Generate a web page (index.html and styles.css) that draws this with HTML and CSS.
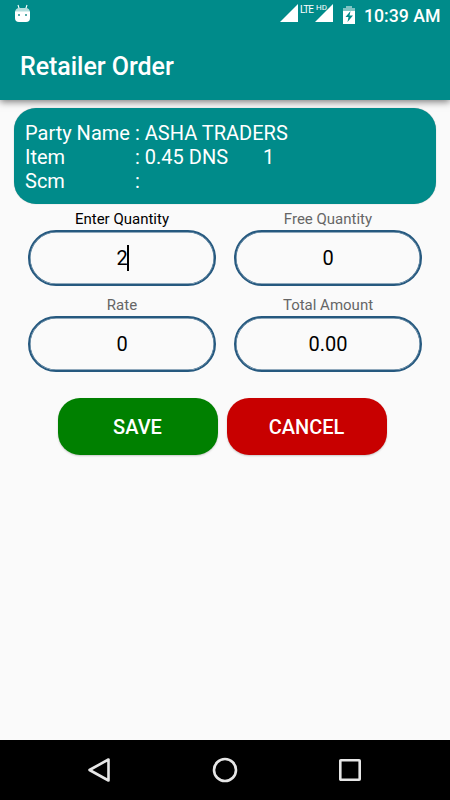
FILE: index.html
```html
<!DOCTYPE html>
<html lang="en">
<head>
<meta charset="utf-8">
<title>Retailer Order</title>
<link rel="stylesheet" href="styles.css">
</head>
<body>
<div class="screen">
  <header class="top">
    <div class="status">
      <svg class="droid" width="15" height="18" viewBox="0 0 15 18"><path d="M3 1 4.300 5M12 1 10.700 5" stroke="#fff" stroke-width="1.1"/><path d="M0 9Q0 4 4.500 4h6Q15 4 15 9Z" fill="#b5dedd"/><path d="M0 7.500h15V14q0 4-4 4h-7q-4 0-4-4Z" fill="#fff"/><path d="M3 10h2v2H3zM10 10h2v2h-2z" fill="#55aaa9"/></svg>
      <div class="indicators">
        <svg width="18" height="18" viewBox="0 0 18 18"><path d="M0 18 18 0V18Z" fill="#fff"/></svg>
        <span class="net">LTE</span>
        <span class="sim"><svg width="18" height="18" viewBox="0 0 18 18"><path d="M0 18 18 0V18Z" fill="#fff"/></svg><span class="hd">HD</span></span>
        <svg class="battery" width="12" height="18" viewBox="0 0 12 18"><path d="M0 2h3V0h6v2h3v4H0Z" fill="#7fc4c3"/><path d="M0 5h12v13H0Z" fill="#fff"/><path d="M7.500 5 2.500 11h3L4.500 16 10 9.500H6.500Z" fill="#008b8a"/></svg>
        <span class="clock">10:39 AM</span>
      </div>
    </div>
    <h1>Retailer Order</h1>
  </header>
  <main>
    <section class="card">
      <span>Party Name</span><span>: ASHA TRADERS</span><span></span>
      <span>Item</span><span>: 0.45 DNS</span><span>1</span>
      <span>Scm</span><span>:</span><span></span>
    </section>
    <form class="fields">
      <div class="field active"><label>Enter Quantity</label><div class="box">2<i class="caret"></i></div></div>
      <div class="field"><label>Free Quantity</label><div class="box">0</div></div>
      <div class="field"><label>Rate</label><div class="box">0</div></div>
      <div class="field"><label>Total Amount</label><div class="box">0.00</div></div>
    </form>
    <div class="actions">
      <button class="save">SAVE</button>
      <button class="cancel">CANCEL</button>
    </div>
  </main>
  <nav>
    <svg width="24" height="26" viewBox="0 0 24 26"><path d="M21.500 2.500V23.500L2.500 13Z"/></svg>
    <svg width="26" height="26" viewBox="0 0 26 26"><circle cx="13" cy="13" r="11"/></svg>
    <svg width="24" height="26" viewBox="0 0 24 26"><rect x="2.300" y="3.300" width="19.400" height="19.400" rx=".5"/></svg>
  </nav>
</div>
</body>
</html>
```
FILE: styles.css
```css
* { box-sizing: border-box; }
body { margin: 0; font-family: Roboto, sans-serif; background: #fafafa; }
.screen { width: 450px; height: 800px; display: flex; flex-direction: column; overflow: hidden; }
.top { height: 100px; background: #008b8a; color: #fff; box-shadow: 0 2px 7px rgba(0,0,0,.5); flex: none; }
.status { height: 32px; padding: 4px 11px 0 15px; display: flex; justify-content: space-between; align-items: flex-start; }
.indicators { display: flex; align-items: flex-start; }
.indicators svg { display: block; flex: none; }
.net { width: 16px; padding-left: 2px; font-size: 10px; line-height: 11px; letter-spacing: -.9px; white-space: nowrap; }
.sim { position: relative; margin-left: 1px; }
.hd { position: absolute; left: 1px; top: -1px; font-size: 8px; line-height: 9px; }
.indicators .battery { margin: 2px 0 0 10px; }
.clock { width: 75px; margin-left: 9px; font-size: 17.700px; line-height: 24px; font-weight: 500; white-space: nowrap; }
h1 { margin: 19px 0 0 20px; font-size: 25px; line-height: 32px; font-weight: 500; letter-spacing: -.04px; }
main { flex: 1; padding-top: 8px; }
.card { width: 422px; height: 96px; margin: 0 auto; padding: 13px 11px; border-radius: 22px; background: #008b8a; box-shadow: 0 0 1px rgba(0,0,0,.35); color: #fff; font-size: 20px; line-height: 24px; display: grid; grid-template-columns: 110px 128px 1fr; grid-template-rows: repeat(3, 24px); white-space: nowrap; }
.fields { display: grid; grid-template-columns: 188px 188px; gap: 8px 18px; justify-content: center; padding-top: 4px; }
.field { display: flex; flex-direction: column; text-align: center; }
.field label { height: 22px; font-size: 15px; line-height: 22px; letter-spacing: 0; color: #666; }
.field.active label { color: #000; }
.box { height: 56px; border: 2px solid #26597f; box-shadow: inset 0 0 0 .5px #26597f; border-radius: 28px; display: flex; align-items: center; justify-content: center; color: #000; font-size: 20px; position: relative; }
.caret { position: absolute; left: 97px; top: 13px; width: 2px; height: 26px; background: #000; }
.actions { display: flex; justify-content: center; gap: 9px; padding-top: 26px; margin-right: 6px; }
.actions button { width: 160px; height: 57px; padding: 0; border: 0; border-radius: 22px; color: #fff; font: 500 20px Roboto, sans-serif; box-shadow: 0 1px 2px rgba(0,0,0,.2); }
.save { background: #008000; }
.cancel { background: #c80000; }
nav { height: 60px; background: #000; display: flex; align-items: center; justify-content: space-between; padding: 0 88px 0 87px; flex: none; }
nav svg { fill: none; stroke: #e6e6e6; stroke-width: 2.600; stroke-linejoin: round; }
```
